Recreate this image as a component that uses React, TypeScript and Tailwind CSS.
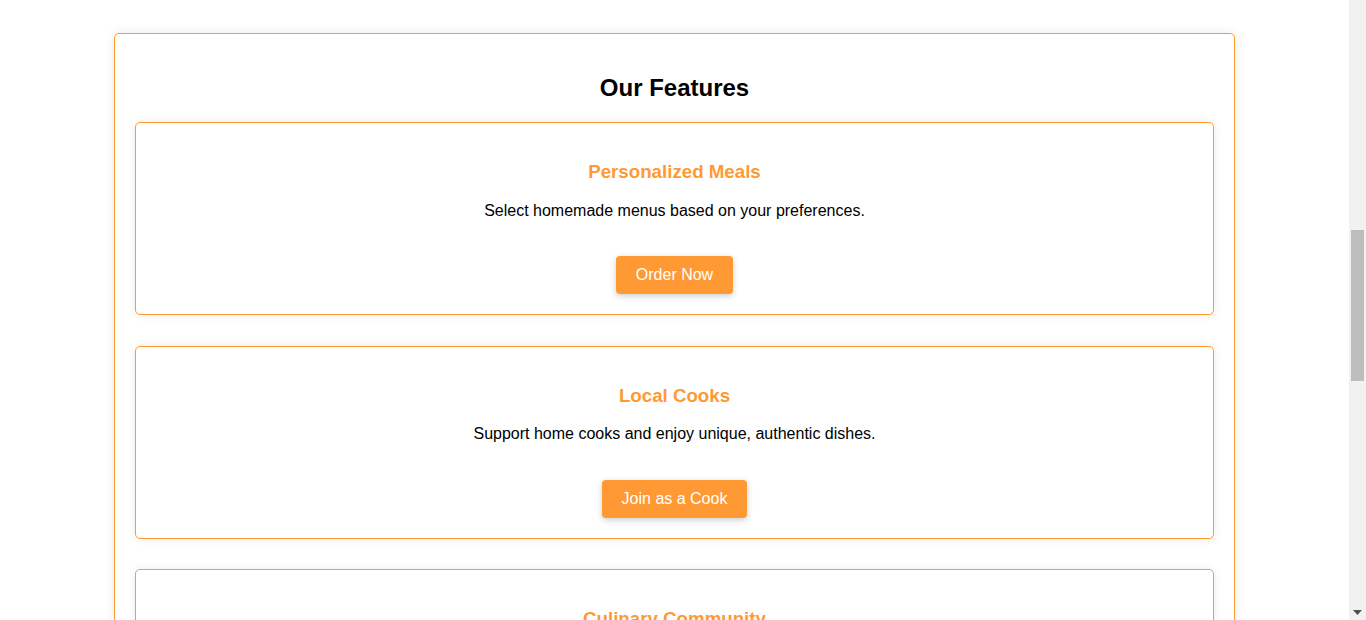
import React from "react";

const features = [
  {
    title: "Personalized Meals",
    desc: "Select homemade menus based on your preferences.",
    cta: "Order Now",
  },
  {
    title: "Local Cooks",
    desc: "Support home cooks and enjoy unique, authentic dishes.",
    cta: "Join as a Cook",
  },
  {
    title: "Culinary Community",
    desc: "Share recipes and connect with fellow food lovers.",
    cta: "Join the Community",
  },
];

function FeatureCard({ title, desc, cta }: { title: string; desc: string; cta: string }) {
  return (
    <div className="flex flex-col items-center rounded-[5px] border border-[#ff9933] bg-white px-5 pb-5 pt-[38px] text-center shadow-[0_0_10px_rgba(0,0,0,0.08)]">
      <h3 className="text-[18.72px] font-bold leading-[22.5px] text-[#ff9933]">{title}</h3>
      <p className="mt-[18px] text-[16px] leading-[18px] text-black">{desc}</p>
      <button className="mt-[36.5px] h-[38px] rounded-[4px] bg-[#ff9933] px-5 text-[16px] leading-[18px] text-white shadow-[0_2px_6px_rgba(0,0,0,0.2)]">
        {cta}
      </button>
    </div>
  );
}

export default function App() {
  return (
    <div
      className="flex h-[620px] w-full overflow-hidden bg-white"
      style={{ fontFamily: '"Liberation Sans", Arial, sans-serif' }}
    >
      <main className="flex flex-1 justify-center pt-[33px]">
        <section className="flex h-max w-[1121px] flex-col gap-5 rounded-[5px] border border-[#ff9933] bg-white px-5 pt-10 shadow-[0_0_12px_rgba(0,0,0,0.08)]">
          <h2 className="text-center text-[24px] font-bold leading-[28px] text-black">Our Features</h2>
          <div className="flex flex-col gap-[30.6px]">
            {features.map((f) => (
              <FeatureCard key={f.title} {...f} />
            ))}
          </div>
        </section>
      </main>
      <div className="flex h-full w-[17px] shrink-0 flex-col items-center bg-[#f1f1f1]">
        <div className="h-[230px]" />
        <div className="h-[151px] w-[13px] bg-[#bdbdbd]" />
        <div className="flex-1" />
        <svg width="9" height="5" viewBox="0 0 9 5" className="mb-[5px]">
          <path d="M0 0 H9 L4.5 5 Z" fill="#505050" />
        </svg>
      </div>
    </div>
  );
}
